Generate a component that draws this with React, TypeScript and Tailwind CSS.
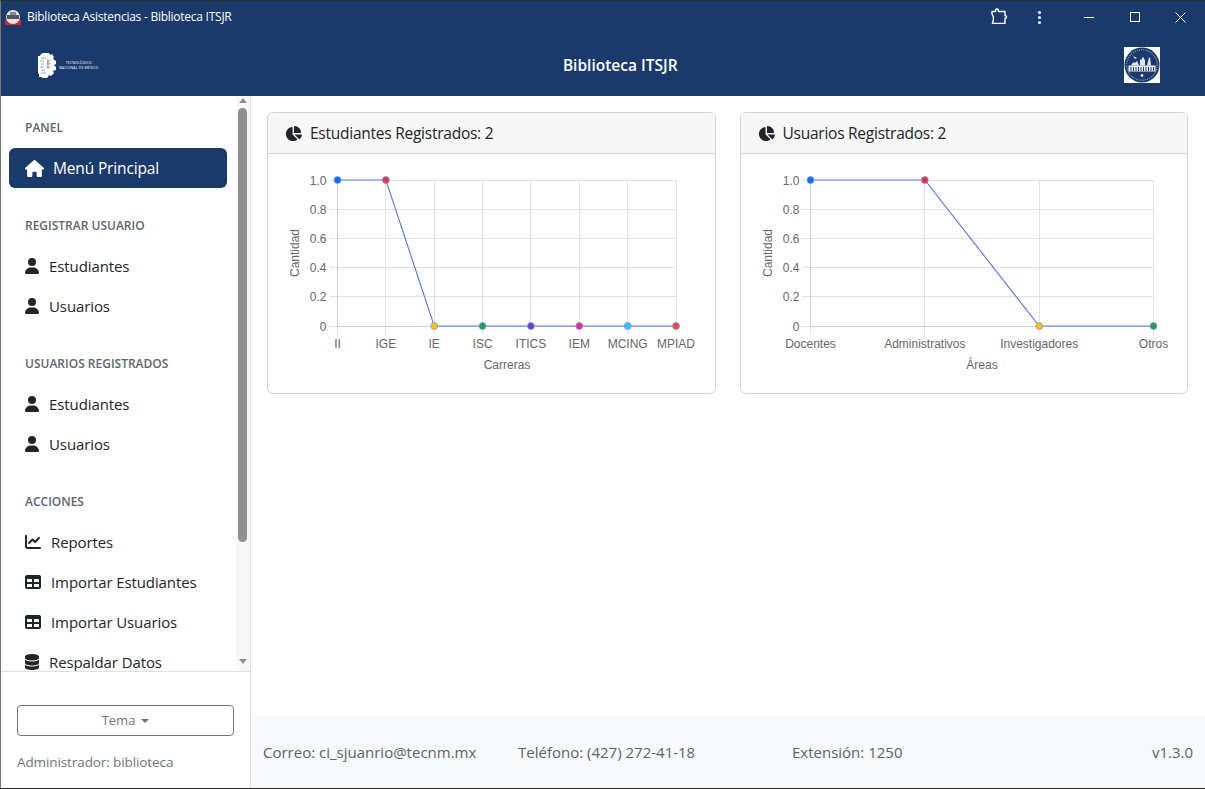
import React from 'react';
import { FaChartLine, FaChartPie, FaDatabase, FaHouse, FaTable, FaUser } from 'react-icons/fa6';

const dotColors = ['#0d6efd', '#dc3545', '#ffc107', '#22a050', '#6f42c1', '#d63384', '#2fc6f0', '#e74c3c'];

interface ChartProps {
  labels: string[];
  values: number[];
  xTitle: string;
  left: number;
  right: number;
  titleX: number;
}

// plot area is drawn in card coordinates, the svg starts right below the card header
const LineChart = ({ labels, values, xTitle, left, right, titleX }: ChartProps) => {
  const top = 26;
  const step = 29.2;
  const bottom = top + step * 5;
  const dx = (right - left) / (labels.length - 1);
  const ys = ['1.0', '0.8', '0.6', '0.4', '0.2', '0'];
  const px = (i: number) => left + dx * i;
  const py = (v: number) => bottom - (bottom - top) * v;
  const crisp = (n: number) => Math.floor(n) + 0.5;

  return (
    <svg width="100%" height="240" className="block">
      {ys.map((y, i) => (
        <g key={y}>
          <line x1={left - 8} x2={right} y1={crisp(top + step * i)} y2={crisp(top + step * i)} stroke="#e2e2e2" />
          <text x={left - 11} y={top + step * i + 4.5} textAnchor="end" fontSize="12" fill="#666" fontFamily="Liberation Sans, Arial, sans-serif">
            {y}
          </text>
        </g>
      ))}
      {labels.map((l, i) => (
        <g key={l}>
          <line x1={crisp(px(i))} x2={crisp(px(i))} y1={top} y2={bottom + 8} stroke="#e2e2e2" />
          <text x={px(i)} y={bottom + 22} textAnchor="middle" fontSize="12" fill="#666" fontFamily="Liberation Sans, Arial, sans-serif">
            {l}
          </text>
        </g>
      ))}
      <line x1={crisp(left)} x2={crisp(left)} y1={top} y2={bottom} stroke="#cfcfcf" />
      <line x1={left} x2={right} y1={crisp(bottom)} y2={crisp(bottom)} stroke="#cfcfcf" />
      <polyline
        points={values.map((v, i) => `${px(i)},${py(v)}`).join(' ')}
        fill="none"
        stroke="#5f7fe0"
        strokeWidth="1.2"
      />
      {values.map((v, i) => (
        <circle key={i} cx={px(i)} cy={py(v)} r="3.5" fill={dotColors[i]} stroke="#7f9cec" strokeWidth="0.8" />
      ))}
      <text x={titleX} y={bottom + 43} textAnchor="middle" fontSize="12" fill="#666" fontFamily="Liberation Sans, Arial, sans-serif">
        {xTitle}
      </text>
      <text
        transform={`translate(${left - 39},${top + 73}) rotate(-90)`}
        textAnchor="middle"
        fontSize="12"
        fill="#666"
        fontFamily="Liberation Sans, Arial, sans-serif"
      >
        Cantidad
      </text>
    </svg>
  );
};

const ChartCard = ({ title, children }: { title: string; children: React.ReactNode }) => (
  <div className="h-[282px] rounded-md border border-[#d3d3d3] bg-white overflow-hidden">
    <div className="h-[41px] flex items-center gap-[8px] px-[17px] bg-[#f7f7f7] border-b border-[#d3d3d3] text-[#212529] text-[15.5px] tracking-[-0.25px]">
      <FaChartPie className="w-[17px] h-[17px]" />
      <span className="pt-[2px]">{title}</span>
    </div>
    {children}
  </div>
);

const SectionTitle = ({ children }: { children: React.ReactNode }) => (
  <div className="h-[22px] mb-[10px] pl-[24px] pt-[2px] flex items-center text-[12px] font-semibold text-[#5c6670]">{children}</div>
);

const NavItem = ({ icon, label, gap = 'gap-[10px]' }: { icon: React.ReactNode; label: string; gap?: string }) => (
  <div className={`h-10 pl-[24px] flex items-center ${gap} text-[15px] tracking-[-0.1px] text-[#212529] whitespace-nowrap`}>
    {icon}
    <span>{label}</span>
  </div>
);

const Puzzle = () => (
  <svg width="18" height="18" viewBox="0 0 18 18" fill="none" stroke="white" strokeWidth="1.4" strokeLinejoin="round">
    <path d="M2 3.5h3.5V2.4c0-.9.6-1.4 1.5-1.4s1.5.5 1.5 1.4v1.1H15v4.2h.4c.8 0 1.2.5 1.2 1.2s-.4 1.2-1.2 1.2H15v5.3H2.4l1-3.5V9L2 6z" />
  </svg>
);

const TecLogo = () => (
  <div className="flex items-center gap-[3px] text-white">
    <svg width="18" height="25" viewBox="0 0 18 25">
      <path
        d="M5 0h6l1 2 2-1 2 3-1 2 3 2v3l-2 1 2 2v3l-3 1 1 2-3 3-2-1-1 2-1 1H5l-2-1-2 0 0-3-1-1V3l2 0 1-2z"
        fill="white"
      />
      <path d="M3 5h5M2 8h4M3 11h3M2 14h4M3 17h4M3 20h5" stroke="#7d8fae" strokeWidth="0.8" />
      <path d="M9 6l4 2-3 1 3 2-3 1 2 3-3 1z" fill="#9dacc6" />
    </svg>
    <div className="text-[3.5px] leading-[5px] font-medium tracking-[0.15px] whitespace-nowrap">
      <div className="text-center">TECNOLÓGICO</div>
      <div>NACIONAL DE MÉXICO</div>
    </div>
  </div>
);

const SchoolLogo = () => (
  <div className="w-9 h-9 bg-white flex items-center justify-center">
    <svg width="36" height="36" viewBox="0 0 36 36">
      <circle cx="18" cy="18" r="17.5" fill="#1a3a6b" />
      <circle cx="18" cy="18" r="15.2" fill="none" stroke="#8fa3c4" strokeWidth="1.2" strokeDasharray="1 1.2" />
      <path d="M4.5 18.5h27v6h-27z" fill="#e6ebf3" />
      <path d="M7 20v4M9.5 20v4M12 20v4M14.5 20v4M17 20v4M19.5 20v4M22 20v4M24.5 20v4M27 20v4M29.5 20v4" stroke="#1a3a6b" strokeWidth="1" />
      <path d="M7 18.5l2-3h3l1-2 2 5zM16 18.5v-6h2v-2h2v2h1v6zM23 18.5l2-8 1 0 1 8z" fill="#dfe5ef" />
      <path d="M9 9l4 2-2 1z" fill="#dfe5ef" />
      <circle cx="18" cy="28.5" r="1.4" fill="#dfe5ef" />
    </svg>
  </div>
);

const AppIcon = () => (
  <div className="ml-[4px] w-4 h-4 bg-[#1a3a6b] relative overflow-hidden">
    <div className="absolute left-0 right-0 bottom-0 h-[5px] bg-[#d8232a]" />
    <div className="absolute inset-[1px] rounded-full bg-[#e4e4e4]" />
    <div className="absolute left-[2px] right-[2px] top-[6px] h-[4px] bg-[#555]" />
    <div className="absolute left-[5px] right-[5px] top-[3px] h-[3px] bg-[#888]" />
  </div>
);

const App = () => {
  return (
    <div className="w-[1205px] h-[789px] overflow-hidden flex flex-col bg-white border-t border-b border-l border-t-[#2b2f36] border-b-[#222] border-l-[#777] font-['Open_Sans',sans-serif]">
      <header className="h-[95px] bg-[#1a3a6b] text-white shrink-0">
        <div className="h-[32px] flex items-center">
          <AppIcon />
          <span className="ml-[6px] text-[12px] tracking-[-0.25px]">Biblioteca Asistencias - Biblioteca ITSJR</span>
          <div className="ml-auto flex items-center">
            <Puzzle />
            <div className="ml-[30px] flex flex-col gap-[2px]">
              <span className="w-[3px] h-[3px] bg-white rounded-full" />
              <span className="w-[3px] h-[3px] bg-white rounded-full" />
              <span className="w-[3px] h-[3px] bg-white rounded-full" />
            </div>
            <div className="ml-[43px] w-[10px] h-px bg-white" />
            <div className="ml-[36px] w-[10px] h-[10px] border border-white" />
            <svg className="ml-[35px] mr-[19px]" width="11" height="11" viewBox="0 0 11 11" stroke="white" strokeWidth="1">
              <path d="M0.5 0.5l10 10M10.5 0.5l-10 10" />
            </svg>
          </div>
        </div>
        <div className="h-[63px] pt-[1px] pl-[37px] pr-[45px] flex items-center justify-between">
          <TecLogo />
          <span className="ml-[18px] pt-[2px] text-[15.5px] font-semibold">Biblioteca ITSJR</span>
          <SchoolLogo />
        </div>
      </header>

      <div className="flex-1 min-h-0 flex">
        <aside className="w-[250px] shrink-0 border-r border-[#dee2e6] flex flex-col">
          <div className="h-[576px] flex border-b border-[#dee2e6]">
            <nav className="flex-1 min-w-0 overflow-hidden pt-[20px] flex flex-col gap-[26px]">
              <div>
                <SectionTitle>PANEL</SectionTitle>
                <div className="ml-[8px] mr-[9px] h-10 rounded-md bg-[#1a3a6b] text-white flex items-center gap-[9px] pl-[16px] text-[15.5px] tracking-[-0.15px]">
                  <FaHouse className="w-[19px] h-[17px]" />
                  <span className="pt-[2px]">Menú Principal</span>
                </div>
              </div>
              <div>
                <SectionTitle>REGISTRAR USUARIO</SectionTitle>
                <NavItem icon={<FaUser className="w-[14px] h-[16px]" />} label="Estudiantes" />
                <NavItem icon={<FaUser className="w-[14px] h-[16px]" />} label="Usuarios" />
              </div>
              <div>
                <SectionTitle>USUARIOS REGISTRADOS</SectionTitle>
                <NavItem icon={<FaUser className="w-[14px] h-[16px]" />} label="Estudiantes" />
                <NavItem icon={<FaUser className="w-[14px] h-[16px]" />} label="Usuarios" />
              </div>
              <div>
                <SectionTitle>ACCIONES</SectionTitle>
                <NavItem icon={<FaChartLine className="w-4 h-4" />} label="Reportes" />
                <NavItem icon={<FaTable className="w-4 h-4" />} label="Importar Estudiantes" />
                <NavItem icon={<FaTable className="w-4 h-4" />} label="Importar Usuarios" />
                <NavItem icon={<FaDatabase className="w-[14px] h-[16px]" />} label="Respaldar Datos" />
              </div>
            </nav>
            <div className="w-[14px] shrink-0 pr-[1px] bg-[#f8f8f8] flex flex-col items-center">
              <div className="mt-[2px] w-0 h-0 border-x-[4px] border-x-transparent border-b-[5px] border-b-[#8f8f8f]" />
              <div className="mt-[5px] w-[9px] h-[434px] rounded-full bg-[#8f8f8f]" />
              <div className="mt-auto mb-[7px] w-0 h-0 border-x-[4px] border-x-transparent border-t-[5px] border-t-[#8f8f8f]" />
            </div>
          </div>
          <div className="flex-1 px-[16px] pt-[33px]">
            <div className="h-[31px] rounded border border-[#6c757d] flex items-center justify-center gap-[6px] text-[13px] text-[#6c757d]">
              <span>Tema</span>
              <span className="w-0 h-0 border-x-[4px] border-x-transparent border-t-[4px] border-t-[#6c757d]" />
            </div>
            <div className="mt-[16px] text-[13.5px] text-[#6c757d] tracking-[-0.1px]">Administrador: biblioteca</div>
          </div>
        </aside>

        <main className="flex-1 min-w-0 flex flex-col">
          <div className="flex-1 pt-4 pl-4 pr-[17px] grid grid-cols-2 gap-6 content-start">
            <ChartCard title="Estudiantes Registrados: 2">
              <LineChart
                labels={['II', 'IGE', 'IE', 'ISC', 'ITICS', 'IEM', 'MCING', 'MPIAD']}
                values={[1, 1, 0, 0, 0, 0, 0, 0]}
                xTitle="Carreras"
                left={69.5}
                right={408}
                titleX={239}
              />
            </ChartCard>
            <ChartCard title="Usuarios Registrados: 2">
              <LineChart
                labels={['Docentes', 'Administrativos', 'Investigadores', 'Otros']}
                values={[1, 1, 0, 0]}
                xTitle="Áreas"
                left={69.5}
                right={412.5}
                titleX={241}
              />
            </ChartCard>
          </div>
          <footer className="h-[72px] shrink-0 bg-[#f8f9fa] px-3 flex items-center text-[15px] text-[#5c636a]">
            <span className="w-[255px]">Correo: ci_sjuanrio@tecnm.mx</span>
            <span className="w-[274px]">Teléfono: (427) 272-41-18</span>
            <span>Extensión: 1250</span>
            <span className="ml-auto">v1.3.0</span>
          </footer>
        </main>
      </div>
    </div>
  );
};

export default App;
